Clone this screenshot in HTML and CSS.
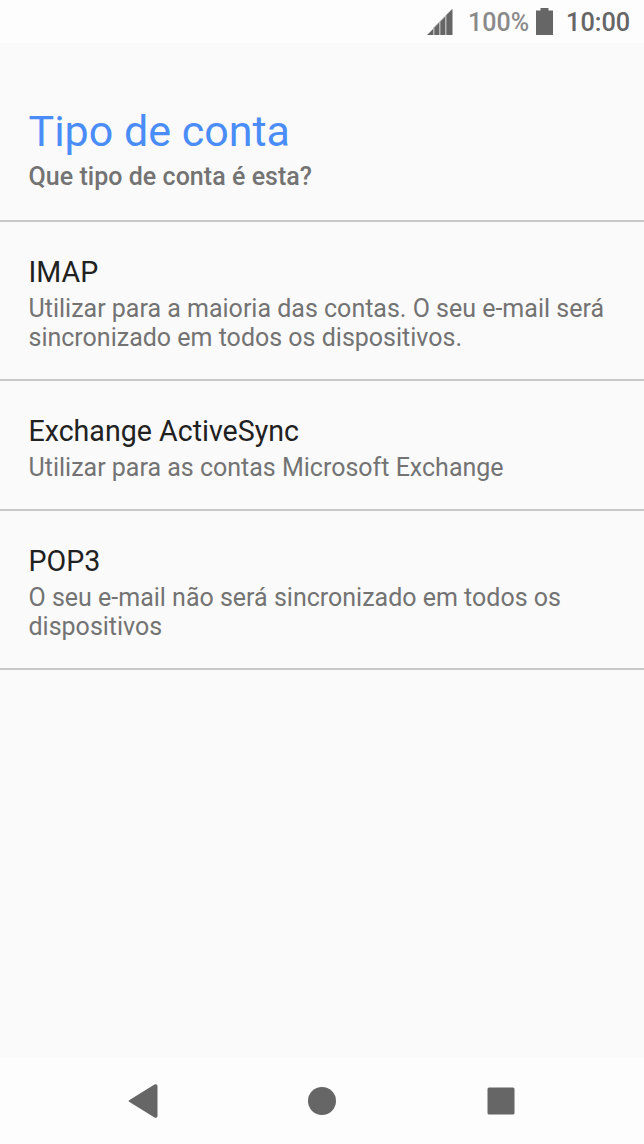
FILE: index.html
```html
<!DOCTYPE html>
<html lang="pt">
<head>
<meta charset="utf-8">
<title>Tipo de conta</title>
<link rel="stylesheet" href="styles.css">
</head>
<body>
<div class="screen">
  <header class="status">
    <svg class="signal" width="26" height="26" viewBox="0 0 26 26"><path class="gaps" d="M6 26V19L25 0V26Z"/><path d="M0 26L6 20V26ZM7.500 26V18.500L12 14V26ZM13.500 26V12.500L18 8V26ZM19.500 26V6L25.500 0V26Z"/></svg>
    <span class="percent">100%</span>
    <svg class="battery" width="17" height="27" viewBox="0 0 17 27"><path d="M4.500 0H12.500V2.500H17V27H0V2.500H4.500Z"/></svg>
    <span class="clock">10:00</span>
  </header>
  <main class="content">
    <section class="intro">
      <h1 class="title">Tipo de conta</h1>
      <p class="subtitle">Que tipo de conta é esta?</p>
    </section>
    <section class="option">
      <h2 class="name">IMAP</h2>
      <p class="detail">Utilizar para a maioria das contas. O seu e-mail será<br>sincronizado em todos os dispositivos.</p>
    </section>
    <section class="option">
      <h2 class="name">Exchange ActiveSync</h2>
      <p class="detail">Utilizar para as contas Microsoft Exchange</p>
    </section>
    <section class="option">
      <h2 class="name">POP3</h2>
      <p class="detail">O seu e-mail não será sincronizado em todos os<br>dispositivos</p>
    </section>
  </main>
  <nav class="navbar">
    <svg class="back" width="30" height="34" viewBox="0 0 30 34"><path d="M1.500 16L26.500 .5Q29.500 -.5 29.500 2V32Q29.500 34.500 26.500 33.500L1.500 18Q-.2 17 1.500 16Z"/></svg>
    <svg class="home" width="28" height="28" viewBox="0 0 28 28"><circle cx="14" cy="14" r="14"/></svg>
    <svg class="recent" width="28" height="28" viewBox="0 0 28 28"><rect x=".5" y=".5" width="27" height="27" rx="1.500"/></svg>
  </nav>
</div>
</body>
</html>
```
FILE: styles.css
```css
* { box-sizing: border-box; }
body, h1, h2, p { margin: 0; }
body { font-family: Roboto, sans-serif; }
svg { display: block; flex: none; fill: #666; }
.screen { width: 644px; height: 1144px; display: flex; flex-direction: column; background: #fafafa; overflow: hidden; }
.status { height: 43px; flex: none; display: flex; padding: 0 15px 0 0; justify-content: flex-end; background: #fdfdfd; white-space: nowrap; }
.signal { margin: 9px 15px 0 0; }
.gaps { fill: #b5b5b5; }
.percent { width: 61px; font-size: 25px; line-height: 46px; font-weight: 500; color: #8a8a8a; }
.battery { margin: 8px 13px 0 7px; }
.clock { width: 63px; font-size: 25.3px; line-height: 46px; font-weight: 500; color: #666; }
.content { flex: 1; }
.intro { height: 179px; padding: 61px 28.500px 0; border-bottom: 2px solid #c8c8c8; }
.title { font-size: 43px; line-height: 54px; font-weight: 400; color: #4a8df8; }
.subtitle { margin-top: 2px; font-size: 25px; line-height: 34px; font-weight: 500; color: #737373; letter-spacing: .04px; }
.option { padding: 31px 28.500px 27px; border-bottom: 2px solid #c8c8c8; white-space: nowrap; }
.name { margin-bottom: 3px; font-size: 28.600px; line-height: 38px; font-weight: 400; color: #212121; }
.detail { font-size: 25px; line-height: 29px; color: #737373; }
.navbar { height: 86px; flex: none; display: flex; align-items: center; padding-left: 128px; background: #fdfdfd; }
.home { margin-left: 150px; }
.recent { margin-left: 151px; }
```
